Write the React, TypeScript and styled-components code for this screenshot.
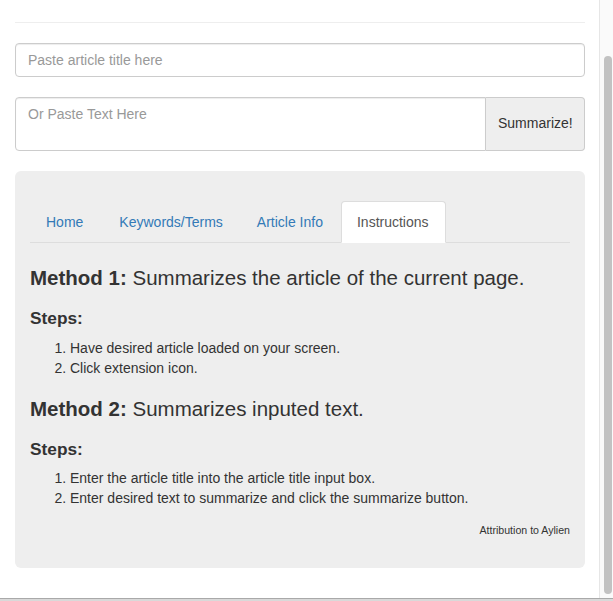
import React from "react";
import styled, { createGlobalStyle } from "styled-components";

const Global = createGlobalStyle`
  html, body { margin: 0; padding: 0; background: #d9d9d9; }
  body { font-family: "Liberation Sans", Arial, sans-serif; font-size: 14px; line-height: 1.42857; color: #333; }
  * { box-sizing: border-box; }
`;

const Frame = styled.div`
  display: flex;
  height: 599px;
  background: #fff;
  border-bottom: 1px solid #a9a9a9;
  overflow: hidden;
`;

const Content = styled.div`
  flex: 1;
  padding: 22px 14px 0 15px;
  display: flex;
  flex-direction: column;
`;

const Rule = styled.hr`
  margin: 0 0 20px 0;
  border: 0;
  border-top: 1px solid #eee;
`;

const TextInput = styled.input`
  display: block;
  width: 100%;
  height: 34px;
  padding: 6px 12px;
  font: inherit;
  font-size: 14px;
  color: #555;
  border: 1px solid #ccc;
  border-radius: 4px;
  box-shadow: inset 0 1px 1px rgba(0, 0, 0, 0.075);
  margin: 0 0 20px 0;
  &::placeholder { color: #999; }
`;

const InputGroup = styled.div`
  display: flex;
  height: 54px;
  margin-bottom: 20px;
`;

const TextArea = styled.textarea`
  flex: 1;
  resize: none;
  padding: 6px 12px;
  font: inherit;
  font-size: 14px;
  line-height: 20px;
  color: #555;
  border: 1px solid #ccc;
  border-radius: 4px 0 0 4px;
  box-shadow: inset 0 1px 1px rgba(0, 0, 0, 0.075);
  &::placeholder { color: #999; }
`;

const AddonButton = styled.button`
  width: 99px;
  padding: 6px 12px 6px 12px;
  font: inherit;
  font-size: 14px;
  color: #333;
  background: #eee;
  border: 1px solid #ccc;
  border-left: 0;
  border-radius: 0 4px 4px 0;
`;

const Well = styled.div`
  background: #eeeeee;
  border-radius: 6px;
  padding: 30px 15px 31px 15px;
`;

const Tabs = styled.ul`
  display: flex;
  list-style: none;
  margin: 0;
  padding: 0;
  border-bottom: 1px solid #ddd;
`;

const Tab = styled.li<{ $active?: boolean; $extra?: number }>`
  margin: 0 2px -1px 0;
  padding: 10px ${(p) => 15 + (p.$extra ?? 0)}px 10px 15px;
  line-height: 20px;
  font-size: 14px;
  border: 1px solid ${(p) => (p.$active ? "#ddd" : "transparent")};
  border-bottom-color: transparent;
  border-radius: 4px 4px 0 0;
  background: ${(p) => (p.$active ? "#fff" : "transparent")};
  color: ${(p) => (p.$active ? "#555" : "#337ab7")};
`;

const MethodTitle = styled.h3<{ $top: number }>`
  margin: ${(p) => p.$top}px 0 0 0;
  font-size: 20.5px;
  line-height: 22px;
  font-weight: 400;
  color: #333;
  b { font-weight: 700; }
`;

const StepsTitle = styled.h4`
  margin: 20px 0 0 0;
  font-size: 17.3px;
  line-height: 18px;
  font-weight: 700;
  color: #333;
`;

const Steps = styled.ol<{ $top: number }>`
  margin: ${(p) => p.$top}px 0 0 0;
  padding-left: 40px;
  font-size: 14px;
  line-height: 20px;
`;

const Attribution = styled.p`
  margin: 15px 0 0 0;
  text-align: right;
  font-size: 10.6px;
  line-height: 14px;
  color: #333;
`;

const ScrollTrack = styled.div`
  width: 14px;
  border-left: 1px solid #e6e6e6;
  background: #fafafa;
  padding: 56px 1px 4px 4px;
  display: flex;
  flex-direction: column;
`;

const ScrollThumb = styled.div`
  width: 8px;
  flex: 1;
  background: #c2c2c2;
  border-radius: 4px;
`;

export default function App() {
  return (
    <>
      <Global />
      <Frame>
        <Content>
          <Rule />
          <TextInput placeholder="Paste article title here" />
          <InputGroup>
            <TextArea placeholder="Or Paste Text Here" rows={2} />
            <AddonButton>Summarize!</AddonButton>
          </InputGroup>
          <Well>
            <Tabs>
              <Tab $extra={2}>Home</Tab>
              <Tab>Keywords/Terms</Tab>
              <Tab>Article Info</Tab>
              <Tab $active $extra={1}>Instructions</Tab>
            </Tabs>
            <MethodTitle $top={24}>
              <b>Method 1:</b> Summarizes the article of the current page.
            </MethodTitle>
            <StepsTitle>Steps:</StepsTitle>
            <Steps $top={11}>
              <li>Have desired article loaded on your screen.</li>
              <li>Click extension icon.</li>
            </Steps>
            <MethodTitle $top={20}>
              <b>Method 2:</b> Summarizes inputed text.
            </MethodTitle>
            <StepsTitle>Steps:</StepsTitle>
            <Steps $top={10}>
              <li>Enter the article title into the article title input box.</li>
              <li>Enter desired text to summarize and click the summarize button.</li>
            </Steps>
            <Attribution>Attribution to Aylien</Attribution>
          </Well>
        </Content>
        <ScrollTrack>
          <ScrollThumb />
        </ScrollTrack>
      </Frame>
    </>
  );
}
